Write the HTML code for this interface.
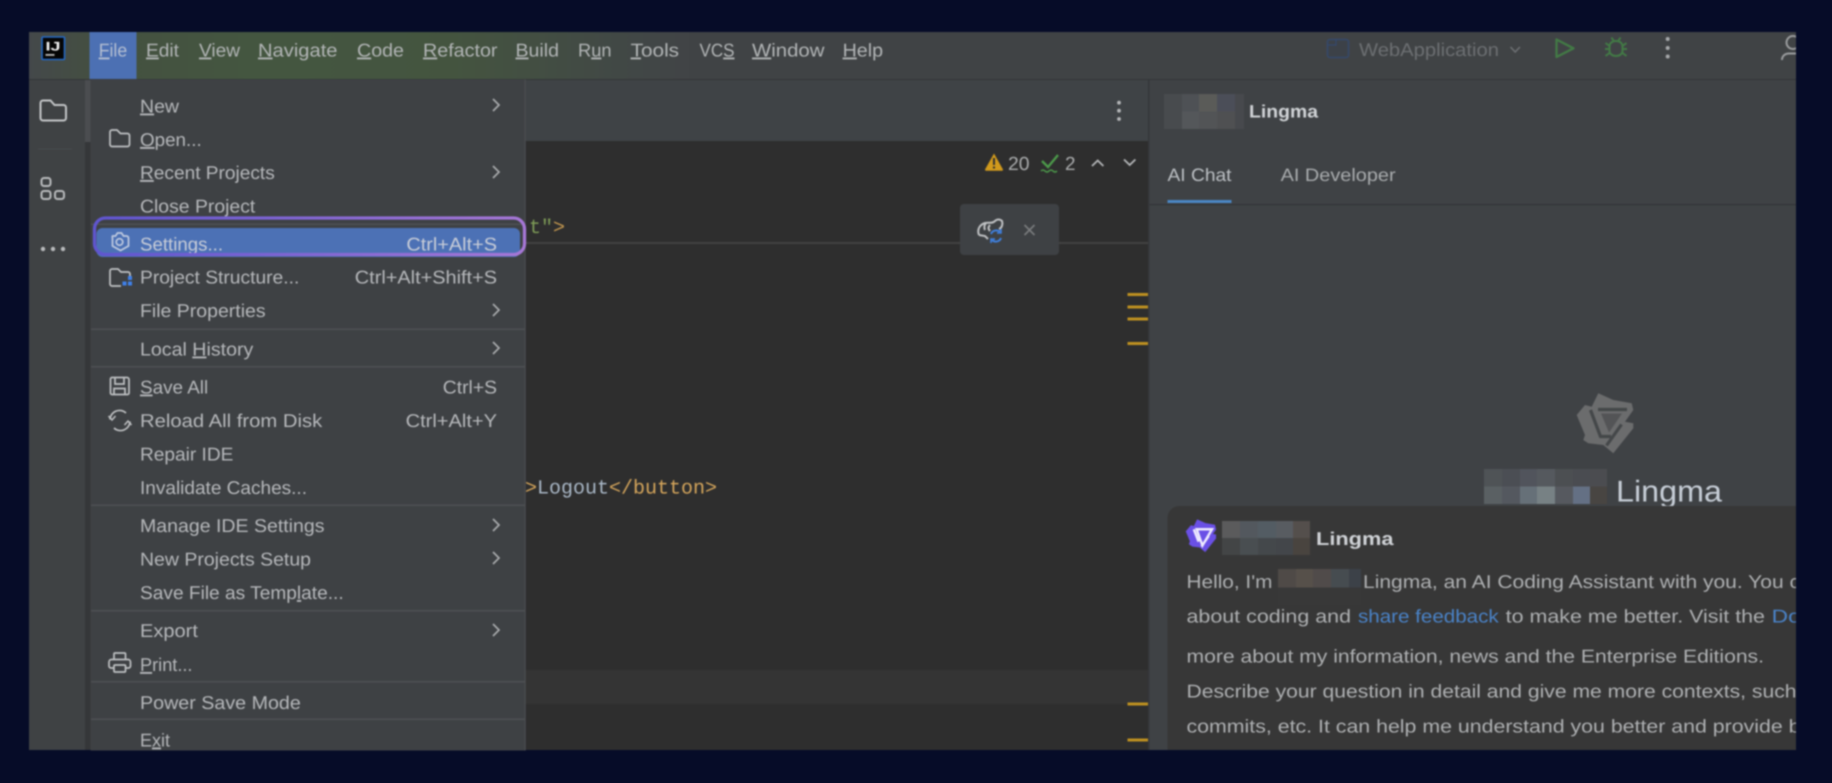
<!DOCTYPE html>
<html lang="en">
<head>
<meta charset="utf-8">
<title>IntelliJ IDEA File menu with Lingma panel</title>
<style>
html,body{margin:0;padding:0;width:1832px;height:783px;overflow:hidden;background:#060c28}
svg{display:block;position:absolute;left:0;top:0;filter:blur(.7px)}
text{font-family:"Liberation Sans",sans-serif;text-rendering:geometricPrecision}
.m text{font-size:18.5px;fill:#b6b8bb}
.bar text{font-size:18.5px;fill:#b2b5b6}
.mono{font-family:"Liberation Mono",monospace;font-size:20px}
.b text{font-size:18.5px;fill:#aeb0b2}
</style>
</head>
<body>
<svg width="1832" height="783" viewBox="0 0 1832 783" xmlns="http://www.w3.org/2000/svg">
<defs>
<linearGradient id="green" x1="29" x2="680" y1="0" y2="0" gradientUnits="userSpaceOnUse">
<stop offset="0" stop-color="#44484a"/><stop offset=".12" stop-color="#43503f"/><stop offset=".35" stop-color="#445640"/><stop offset=".65" stop-color="#44543f"/><stop offset=".9" stop-color="#414845"/><stop offset="1" stop-color="#414446"/>
</linearGradient>
<linearGradient id="purple" x1="94" x2="525" y1="0" y2="0" gradientUnits="userSpaceOnUse">
<stop offset="0" stop-color="#5f55cf"/><stop offset="1" stop-color="#a677d6"/>
</linearGradient>
<path id="starshape" d="M1598.300 393.300L1613.300 400L1631.700 403.300L1633.300 410L1625 421.700L1633.300 423.300L1633.300 428.300L1613.300 453.300L1603.300 445L1588.300 443.300L1583.300 440L1585 435L1576.700 415L1585 405L1591.700 406.700Z"/>
</defs>

<rect width="1832" height="783" fill="#060c28"/>
<!-- window -->
<rect x="29" y="32" width="1767" height="718" fill="#3f4245"/>
<!-- menubar -->
<rect x="29" y="32" width="1767" height="47" fill="#404345"/>
<rect x="29" y="32" width="660" height="47" fill="url(#green)"/>
<rect x="29" y="79" width="1767" height="1" fill="#333538"/>
<rect x="89.500" y="32" width="47" height="47" fill="#4c70b3"/>
<!-- IJ logo -->
<rect x="42" y="37" width="22.500" height="22.500" fill="#050505" stroke="#2468c4" stroke-width="1.600" rx="1"/>
<text x="45.500" y="50.500" font-size="12.500" font-weight="700" fill="#f2f2f2" textLength="15" lengthAdjust="spacingAndGlyphs">IJ</text>
<rect x="45.500" y="54" width="9" height="1.800" fill="#bdbdbd"/>

<g class="bar">
<text x="98.700" y="56.500" textLength="28.500" lengthAdjust="spacingAndGlyphs" style="fill:#b5bfd2"><tspan text-decoration="underline">F</tspan>ile</text>
<text x="146" y="56.500" textLength="33" lengthAdjust="spacingAndGlyphs"><tspan text-decoration="underline">E</tspan>dit</text>
<text x="199" y="56.500" textLength="41" lengthAdjust="spacingAndGlyphs"><tspan text-decoration="underline">V</tspan>iew</text>
<text x="258" y="56.500" textLength="79.500" lengthAdjust="spacingAndGlyphs"><tspan text-decoration="underline">N</tspan>avigate</text>
<text x="357" y="56.500" textLength="47" lengthAdjust="spacingAndGlyphs"><tspan text-decoration="underline">C</tspan>ode</text>
<text x="423" y="56.500" textLength="74.500" lengthAdjust="spacingAndGlyphs"><tspan text-decoration="underline">R</tspan>efactor</text>
<text x="515.500" y="56.500" textLength="43.500" lengthAdjust="spacingAndGlyphs"><tspan text-decoration="underline">B</tspan>uild</text>
<text x="578" y="56.500" textLength="33.500" lengthAdjust="spacingAndGlyphs">R<tspan text-decoration="underline">u</tspan>n</text>
<text x="630.600" y="56.500" textLength="48.500" lengthAdjust="spacingAndGlyphs"><tspan text-decoration="underline">T</tspan>ools</text>
<text x="699.500" y="56.500" textLength="35" lengthAdjust="spacingAndGlyphs">VC<tspan text-decoration="underline">S</tspan></text>
<text x="752" y="56.500" textLength="72.500" lengthAdjust="spacingAndGlyphs"><tspan text-decoration="underline">W</tspan>indow</text>
<text x="842.600" y="56.500" textLength="40.500" lengthAdjust="spacingAndGlyphs"><tspan text-decoration="underline">H</tspan>elp</text>
</g>

<!-- run toolbar -->
<rect x="1327.500" y="39.500" width="21" height="18" rx="2.500" fill="#3c4148" stroke="#34496c" stroke-width="1.500"/>
<path d="M1328 45h8v-5" fill="none" stroke="#34496c" stroke-width="1.200"/>
<text x="1359" y="56" font-size="18.500" fill="#6c6f72" textLength="140" lengthAdjust="spacingAndGlyphs">WebApplication</text>
<path d="M1510.500 47l4.700 5 4.700-5" fill="none" stroke="#6c6f72" stroke-width="1.600"/>
<path d="M1556.500 39.500v17.500l17-8.700z" fill="none" stroke="#427a45" stroke-width="2.300" stroke-linejoin="round"/>
<g fill="none" stroke="#427a45" stroke-width="2">
<path d="M1609.500 46.500c0-3.500 3-5.500 6.500-5.500s6.500 2 6.500 5.500v4c0 3.500-3 5.500-6.500 5.500s-6.500-2-6.500-5.500z"/>
<path d="M1611.500 37.500l2.300 3.500M1620.500 37.500l-2.300 3.500M1605.500 43l4 3M1626.500 43l-4 3M1605 49h4.500M1627 49h-4.500M1605.500 56l4-3M1626.500 56l-4-3"/>
</g>
<g fill="#a6a8aa"><circle cx="1667.700" cy="39" r="2"/><circle cx="1667.700" cy="48" r="2"/><circle cx="1667.700" cy="56.500" r="2"/></g>
<g fill="none" stroke="#9a9c9e" stroke-width="2"><circle cx="1793" cy="42.500" r="6.500"/><path d="M1782 60c0-4 3-6.500 7-6.500h9"/></g>

<!-- left tool strip -->
<rect x="29" y="80" width="56" height="670" fill="#3f4244"/>
<rect x="85" y="80" width="5.500" height="670" fill="#353739"/>
<rect x="85" y="80" width="5.500" height="62" fill="#4b4d50"/>
<path d="M40.500 103a2.500 2.500 0 0 1 2.500-2.500h7.500l4 4.500h9a2.500 2.500 0 0 1 2.500 2.500v10.500a2.500 2.500 0 0 1-2.500 2.500h-20.500a2.500 2.500 0 0 1-2.500-2.500z" fill="none" stroke="#c3c5c7" stroke-width="2"/>
<rect x="38" y="148.500" width="34" height="1" fill="#484a4d"/>
<g fill="none" stroke="#b9bbbd" stroke-width="2">
<rect x="41.500" y="178" width="9" height="8" rx="2.500"/><rect x="41.500" y="191" width="9" height="8" rx="2.500"/><rect x="55" y="191" width="9" height="8" rx="2.500"/>
</g>
<g fill="#b9bbbd"><circle cx="43" cy="249" r="2.200"/><circle cx="53" cy="249" r="2.200"/><circle cx="63" cy="249" r="2.200"/></g>

<!-- editor -->
<rect x="525" y="80" width="624" height="61" fill="#3f4346"/>
<rect x="525" y="141" width="624" height="609" fill="#2e2e2e"/>
<rect x="525" y="670" width="624" height="34" fill="#343434"/>
<rect x="525" y="242" width="624" height="2" fill="#424242"/>
<rect x="1148" y="80" width="1.500" height="670" fill="#35373a"/>
<g fill="#b4b6b8"><circle cx="1119" cy="102.700" r="1.900"/><circle cx="1119" cy="110.700" r="1.900"/><circle cx="1119" cy="119" r="1.900"/></g>

<text class="mono" x="529" y="233" fill="#7d9a56">t"<tspan fill="#c2974f">&gt;</tspan></text>
<text class="mono" x="525" y="493.500" fill="#d3a45b">&gt;<tspan fill="#a9b7c6">Logout</tspan>&lt;/button&gt;</text>

<!-- inspection widget -->
<path d="M994 153.500l9 16a1 1 0 0 1-.8 1.200h-16.400a1 1 0 0 1-.8-1.200z" fill="#d19a1c"/>
<rect x="993" y="158" width="2" height="7" fill="#2f2f2f"/><rect x="993" y="166.500" width="2" height="2" fill="#2f2f2f"/>
<text x="1008" y="170" font-size="19" fill="#a9abac" textLength="21.500" lengthAdjust="spacingAndGlyphs">20</text>
<path d="M1042 161l6 6 10-12" fill="none" stroke="#4c9a4a" stroke-width="2.300"/>
<path d="M1041 171q2-2 4 0t4 0 4 0 4 0" fill="none" stroke="#4c9a4a" stroke-width="1.500"/>
<text x="1065" y="170" font-size="19" fill="#a9abac" textLength="10.500" lengthAdjust="spacingAndGlyphs">2</text>
<path d="M1092 166l5.700-5.500 5.700 5.500M1124 159.500l5.700 5.500 5.700-5.500" fill="none" stroke="#b4b6b8" stroke-width="1.800"/>

<!-- floating popup -->
<rect x="960" y="204" width="99" height="51" rx="4" fill="#3e4144"/>
<path d="M979 235c-2-5 0-10 6-12 4-1 7 1 10-2 2-2 5-2 7 0 1 3 0 7-3 8M986 223c-2 2-2 5-1 7M990 225c-2 2-2 4 0 6M979 235l6 1 3 3" fill="none" stroke="#bfc1c3" stroke-width="2"/>
<path d="M991 234a5.500 5.500 0 0 1 9-2M1001 238a5.500 5.500 0 0 1-9 2" fill="none" stroke="#3f7fdc" stroke-width="2"/>
<path d="M1001 229v4h-4M991 243v-4h4" fill="none" stroke="#3f7fdc" stroke-width="1.600"/>
<path d="M1024.500 225l10 10M1034.500 225l-10 10" stroke="#797b7d" stroke-width="1.700"/>

<!-- scroll markers -->
<g fill="#bd9020">
<rect x="1127.500" y="293" width="20.500" height="3"/><rect x="1127.500" y="305.500" width="20.500" height="3"/><rect x="1127.500" y="317.500" width="20.500" height="3"/><rect x="1127.500" y="342" width="20.500" height="3"/><rect x="1127.500" y="702.500" width="20.500" height="3"/><rect x="1127.500" y="738.500" width="20.500" height="3"/>
</g>

<!-- File menu -->
<rect x="90.700" y="79.500" width="434.300" height="671" fill="#3e4144"/>
<rect x="524.500" y="79.500" width="1.200" height="671" fill="#4b4d50"/>
<g fill="#4e5053">
<rect x="91" y="223.500" width="434" height="1.500"/>
<rect x="91" y="328.500" width="434" height="1.500"/>
<rect x="91" y="366" width="434" height="1.500"/>
<rect x="91" y="504.500" width="434" height="1.500"/>
<rect x="91" y="610" width="434" height="1.500"/>
<rect x="91" y="681" width="434" height="1.500"/>
<rect x="91" y="718.500" width="434" height="1.500"/>
</g>
<rect x="96.500" y="228" width="423.500" height="29" rx="6" fill="#4c71b5"/>

<g class="m">
<text x="140" y="112.500" textLength="39" lengthAdjust="spacingAndGlyphs"><tspan text-decoration="underline">N</tspan>ew</text>
<text x="140" y="146" textLength="61.700" lengthAdjust="spacingAndGlyphs"><tspan text-decoration="underline">O</tspan>pen...</text>
<text x="140" y="179" textLength="134.800" lengthAdjust="spacingAndGlyphs"><tspan text-decoration="underline">R</tspan>ecent Projects</text>
<text x="140" y="212.500" textLength="115.300" lengthAdjust="spacingAndGlyphs">Close Project</text>
<text x="140" y="250.500" textLength="83" lengthAdjust="spacingAndGlyphs" style="fill:#c8cdd8">Settings...</text>
<text x="406.400" y="250.500" textLength="90.600" lengthAdjust="spacingAndGlyphs" style="fill:#c8cdd8">Ctrl+Alt+S</text>
<text x="140" y="283.500" textLength="159.300" lengthAdjust="spacingAndGlyphs">Project Structure...</text>
<text x="354.800" y="283.500" textLength="142.200" lengthAdjust="spacingAndGlyphs">Ctrl+Alt+Shift+S</text>
<text x="140" y="317" textLength="125.600" lengthAdjust="spacingAndGlyphs">File Properties</text>
<text x="140" y="355.500" textLength="113.300" lengthAdjust="spacingAndGlyphs">Local <tspan text-decoration="underline">H</tspan>istory</text>
<text x="140" y="393.500" textLength="68.200" lengthAdjust="spacingAndGlyphs"><tspan text-decoration="underline">S</tspan>ave All</text>
<text x="442.800" y="393.500" textLength="54.200" lengthAdjust="spacingAndGlyphs">Ctrl+S</text>
<text x="140" y="427" textLength="182.200" lengthAdjust="spacingAndGlyphs">Reload All from Disk</text>
<text x="405.600" y="427" textLength="91.400" lengthAdjust="spacingAndGlyphs">Ctrl+Alt+Y</text>
<text x="140" y="460.500" textLength="93.400" lengthAdjust="spacingAndGlyphs">Repair IDE</text>
<text x="140" y="494" textLength="167" lengthAdjust="spacingAndGlyphs">Invalidate Caches...</text>
<text x="140" y="532" textLength="184.500" lengthAdjust="spacingAndGlyphs">Manage IDE Settings</text>
<text x="140" y="565.500" textLength="171" lengthAdjust="spacingAndGlyphs">New Projects Setup</text>
<text x="140" y="599" textLength="203.700" lengthAdjust="spacingAndGlyphs">Save File as Temp<tspan text-decoration="underline">l</tspan>ate...</text>
<text x="140" y="637" textLength="57.900" lengthAdjust="spacingAndGlyphs">Export</text>
<text x="140" y="671" textLength="52.500" lengthAdjust="spacingAndGlyphs"><tspan text-decoration="underline">P</tspan>rint...</text>
<text x="140" y="709" textLength="160.800" lengthAdjust="spacingAndGlyphs">Power Save Mode</text>
<text x="140" y="746.500" textLength="30" lengthAdjust="spacingAndGlyphs">E<tspan text-decoration="underline">x</tspan>it</text>
</g>

<!-- chevrons -->
<g fill="none" stroke="#a9abad" stroke-width="1.700">
<path d="M493 99l6 6-6 6"/><path d="M493 166l6 6-6 6"/><path d="M493 304l6 6-6 6"/><path d="M493 342l6 6-6 6"/><path d="M493 519l6 6-6 6"/><path d="M493 552l6 6-6 6"/><path d="M493 624l6 6-6 6"/>
</g>

<!-- menu icons -->
<g fill="none" stroke="#bfc1c3" stroke-width="1.700">
<path d="M110 132a2 2 0 0 1 2-2h5l3.500 3.500h7a2 2 0 0 1 2 2v9a2 2 0 0 1-2 2h-15.500a2 2 0 0 1-2-2z"/>
<path d="M113 236.500h3l2-3h4l2 3h3a2 2 0 0 1 2 2v8l-8 4.500-8-4.500v-8a2 2 0 0 1 0-2z" stroke="#c0cbe0" transform="translate(-.5 -.5)"/><circle cx="119.500" cy="242" r="3.300" stroke="#c0cbe0"/>
<path d="M121 286h-9a2 2 0 0 1-2-2v-13a2 2 0 0 1 2-2h6l3 3h7a2 2 0 0 1 2 2v4"/>
<path d="M112 377.500h15a2 2 0 0 1 2 2v13.500a1.500 1.500 0 0 1-1.500 1.500h-15.500a1.500 1.500 0 0 1-1.500-1.500v-14a1.500 1.500 0 0 1 1.500-1.500z"/>
<path d="M115 378v6h9v-6M114 394.500v-6h11v6"/>
<path d="M110 419.500a9.500 9.500 0 0 1 16-6.500M130 421.500a9.500 9.500 0 0 1-16 6.500"/>
<path d="M108.500 416l3.500 4 3.500-4M131.500 425l-3.500-4-3.500 4" stroke-width="1.500"/>
<path d="M114 660v-6a1 1 0 0 1 1-1h9.500a1 1 0 0 1 1 1v6"/>
<path d="M114 668h-3a2 2 0 0 1-2-2v-4a2.500 2.500 0 0 1 2.500-2.500h16.500a2.500 2.500 0 0 1 2.500 2.500v4a2 2 0 0 1-2 2h-3"/>
<rect x="114" y="665" width="11.500" height="7" rx="1"/>
</g>
<g fill="#3f80ea"><rect x="122.500" y="281.500" width="4" height="4"/><rect x="128" y="281.500" width="4" height="4"/><rect x="128" y="276" width="4" height="4"/></g>

<!-- purple highlight outline -->
<rect x="94.500" y="218" width="430" height="36.500" rx="11" fill="none" stroke="url(#purple)" stroke-width="3.300"/>

<!-- right panel -->
<rect x="1149.500" y="80" width="646.500" height="670" fill="#3f4245"/>
<rect x="1149.500" y="204" width="646.500" height="1.200" fill="#333538"/>
<!-- header mosaic -->
<g>
<rect x="1164" y="94" width="18" height="35" fill="#484b4e"/>
<rect x="1182" y="94" width="17" height="17.500" fill="#4e5155"/><rect x="1199" y="94" width="18" height="17.500" fill="#5a5b58"/><rect x="1217" y="94" width="18" height="17.500" fill="#4b4e58"/><rect x="1235" y="94" width="9" height="35" fill="#47494d"/>
<rect x="1182" y="111.500" width="17" height="17.500" fill="#54575a"/><rect x="1199" y="111.500" width="18" height="17.500" fill="#525456"/><rect x="1217" y="111.500" width="18" height="17.500" fill="#4f5052"/>
</g>
<text x="1249" y="117.500" font-size="18" font-weight="700" fill="#d0d3d6" textLength="69" lengthAdjust="spacingAndGlyphs">Lingma</text>
<text x="1167.500" y="181" font-size="18" fill="#bcc0c4" textLength="64" lengthAdjust="spacingAndGlyphs">AI Chat</text>
<text x="1280.600" y="181" font-size="18" fill="#a9acae" textLength="115" lengthAdjust="spacingAndGlyphs">AI Developer</text>
<rect x="1167.500" y="200" width="64" height="3" fill="#4a86c4"/>

<!-- big logo -->
<use href="#starshape" fill="#6b6c6d"/>
<path d="M1598 409.500H1627M1590.500 410L1600.500 436.500H1611M1621.500 424.500L1606.500 445.500" fill="none" stroke="#444749" stroke-width="3.200"/>
<path d="M1601 413.500H1622L1609 432.500Z" fill="#535456"/>
<!-- big title mosaic -->
<g>
<rect x="1484" y="469" width="18" height="17.500" fill="#4f5356"/><rect x="1502" y="469" width="18" height="17.500" fill="#4b4e54"/><rect x="1520" y="469" width="17" height="17.500" fill="#51545c"/><rect x="1537" y="469" width="18" height="17.500" fill="#55595e"/><rect x="1555" y="469" width="18" height="17.500" fill="#4c4f52"/><rect x="1573" y="469" width="17" height="17.500" fill="#4a4c51"/><rect x="1590" y="469" width="17" height="17.500" fill="#4b4c50"/>
<rect x="1484" y="486.500" width="18" height="17.500" fill="#5a6063"/><rect x="1502" y="486.500" width="18" height="17.500" fill="#54585f"/><rect x="1520" y="486.500" width="17" height="17.500" fill="#667078"/><rect x="1537" y="486.500" width="18" height="17.500" fill="#778184"/><rect x="1555" y="486.500" width="18" height="17.500" fill="#56595f"/><rect x="1573" y="486.500" width="17" height="17.500" fill="#647084"/><rect x="1590" y="486.500" width="17" height="17.500" fill="#484542"/>
</g>
<text x="1616" y="501.500" font-size="30" fill="#c6cdd6" textLength="106" lengthAdjust="spacingAndGlyphs">Lingma</text>

<!-- card -->
<path d="M1167.500 750v-232a12 12 0 0 1 12-12h617v244z" fill="#373737"/>
<g transform="translate(1201 535.500) scale(.48) translate(-1605 -423)">
<use href="#starshape" fill="#6a50e6" stroke="#6a50e6" stroke-width="6"/>
<path d="M1596 410H1628L1608 444ZM1590 410L1600 436M1621 424L1606 446" fill="none" stroke="#eeeaff" stroke-width="5"/>
</g>
<!-- card mosaics -->
<g>
<rect x="1222" y="521" width="18" height="17" fill="#5b5b5c"/><rect x="1240" y="521" width="18" height="17" fill="#53585e"/><rect x="1258" y="521" width="18" height="17" fill="#535c63"/><rect x="1276" y="521" width="17" height="17" fill="#585c61"/><rect x="1293" y="521" width="17" height="17" fill="#544f4c"/>
<rect x="1222" y="538" width="18" height="17" fill="#434546"/><rect x="1240" y="538" width="18" height="17" fill="#494e51"/><rect x="1258" y="538" width="18" height="17" fill="#44484b"/><rect x="1276" y="538" width="17" height="17" fill="#43464a"/><rect x="1293" y="538" width="17" height="17" fill="#49443f"/>
<rect x="1278" y="569" width="18" height="18.500" fill="#4f4a47"/><rect x="1296" y="569" width="17" height="18.500" fill="#56504a"/><rect x="1313" y="569" width="18" height="18.500" fill="#504b4a"/><rect x="1331" y="569" width="18" height="18.500" fill="#464c50"/><rect x="1349" y="569" width="12" height="18.500" fill="#3c4148"/>
<rect x="1278" y="587.500" width="83" height="17" fill="#383838"/>
</g>
<text x="1316" y="545" font-size="18.500" font-weight="700" fill="#cfd2d6" textLength="77.500" lengthAdjust="spacingAndGlyphs">Lingma</text>
<g class="b">
<text x="1186.500" y="588" textLength="86" lengthAdjust="spacingAndGlyphs">Hello, I'm</text>
<text x="1363" y="588" textLength="437" lengthAdjust="spacingAndGlyphs">Lingma, an AI Coding Assistant with you. You c</text>
<text x="1186.500" y="622.700" textLength="164.500" lengthAdjust="spacingAndGlyphs">about coding and</text>
<text x="1358" y="622.700" textLength="140.700" lengthAdjust="spacingAndGlyphs" style="fill:#4a83c8">share feedback</text>
<text x="1505.700" y="622.700" textLength="259.300" lengthAdjust="spacingAndGlyphs">to make me better. Visit the</text>
<text x="1771.700" y="622.700" textLength="29" lengthAdjust="spacingAndGlyphs" style="fill:#4a83c8">Do</text>
<text x="1186.500" y="662.700" textLength="577.500" lengthAdjust="spacingAndGlyphs">more about my information, news and the Enterprise Editions.</text>
<text x="1186.500" y="697.700" textLength="610" lengthAdjust="spacingAndGlyphs">Describe your question in detail and give me more contexts, such</text>
<text x="1186.500" y="732.700" textLength="614" lengthAdjust="spacingAndGlyphs">commits, etc. It can help me understand you better and provide b</text>
</g>

<!-- outer masks -->
<rect x="1796" y="0" width="36" height="783" fill="#060c28"/>
<rect x="0" y="750.500" width="1832" height="33" fill="#060c28"/>
</svg>
</body>
</html>
